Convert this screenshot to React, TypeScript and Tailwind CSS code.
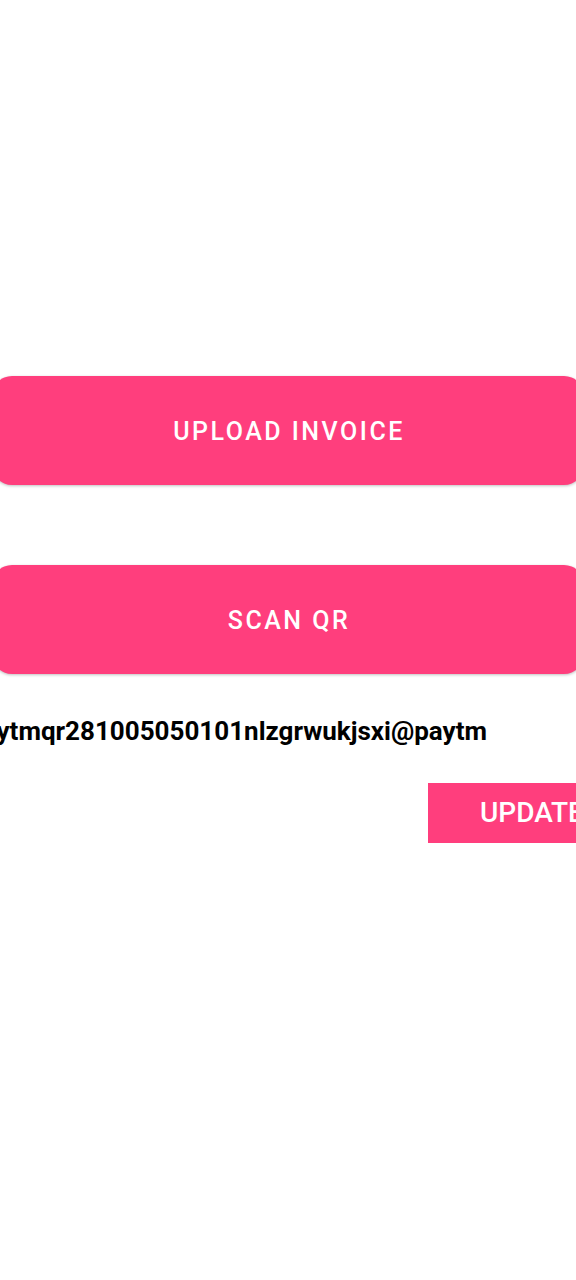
export default function App() {
  const font = { fontFamily: 'Roboto, "Liberation Sans", sans-serif' }
  return (
    <div className="min-h-[1280px] w-[576px] overflow-hidden bg-white" style={font}>
      <div className="flex flex-col pt-[376px]">
        <div className="-mx-[8px] flex flex-col gap-[80px]">
          <button className="h-[109px] rounded-[20px] bg-[#ff3e7d] pt-[3px] pl-[2px] text-[25px] font-medium tracking-[2.5px] text-white shadow-[0_1px_3px_rgba(0,0,0,0.25)]">
            UPLOAD INVOICE
          </button>
          <button className="h-[109px] rounded-[20px] bg-[#ff3e7d] pt-[3px] pl-[2px] text-[25px] font-medium tracking-[2.5px] text-white shadow-[0_1px_3px_rgba(0,0,0,0.25)]">
            SCAN QR
          </button>
        </div>
        <div className="mt-[41px] flex justify-end pr-[89px]">
          <p className="whitespace-nowrap text-[26px] font-bold leading-[32px] text-black">
            paytmqr281005050101nlzgrwukjsxi@paytm
          </p>
        </div>
        <div className="mt-[36px] flex justify-end">
          <button className="-mr-[30px] h-[60px] w-[178px] bg-[#ff3e7d] pl-[52px] text-left text-[28px] font-medium text-white">
            UPDATE
          </button>
        </div>
      </div>
    </div>
  )
}
